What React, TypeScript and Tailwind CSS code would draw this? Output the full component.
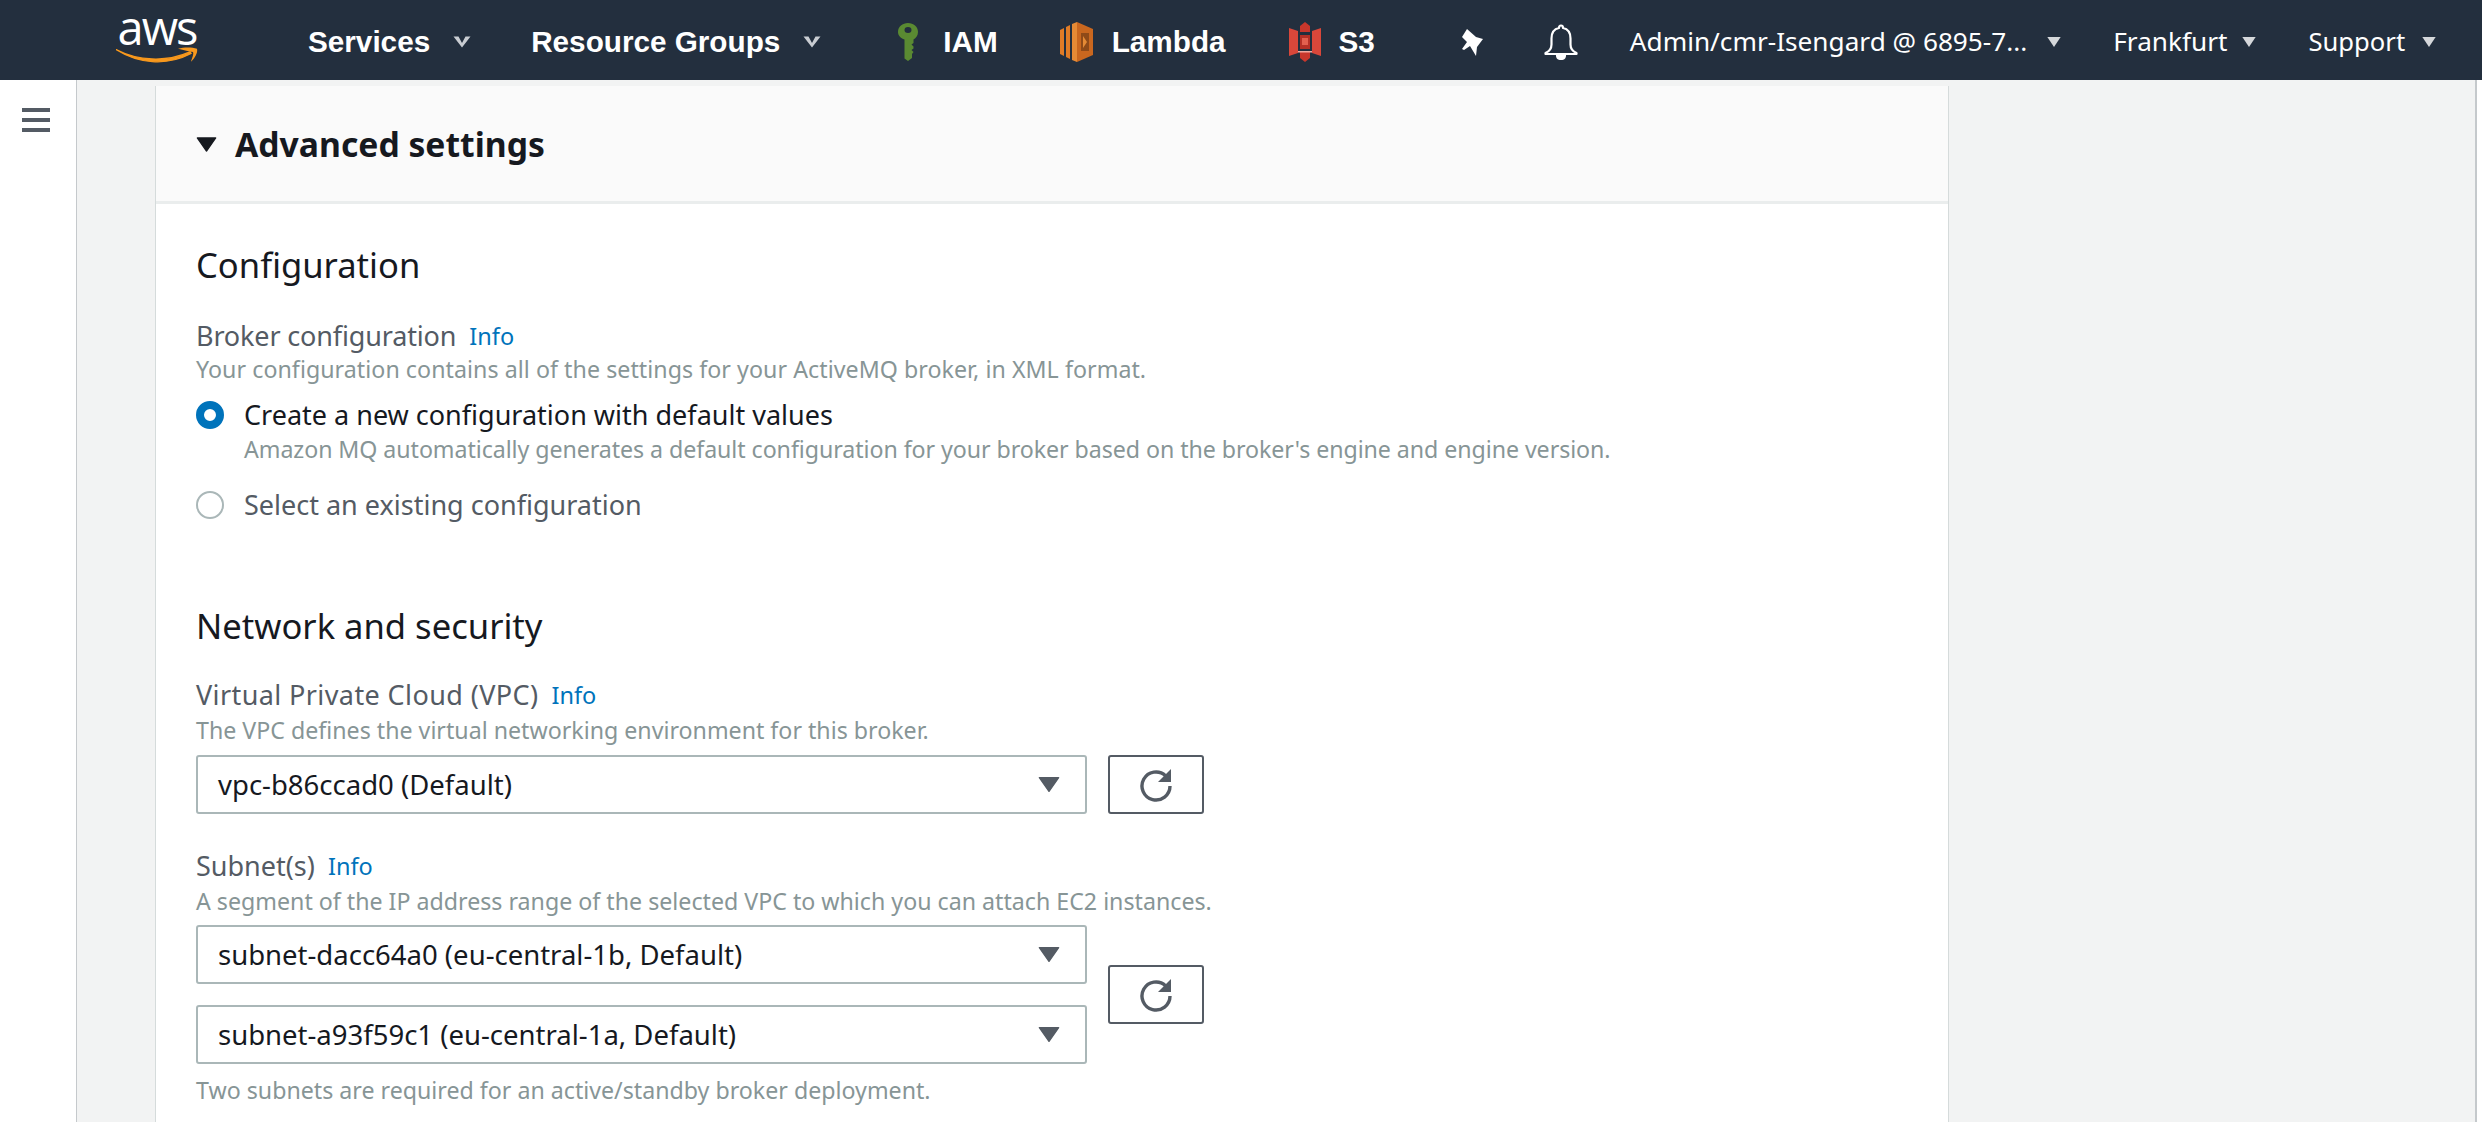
import React from 'react';

const Caret = ({ className }: { className: string }) => (
  <svg viewBox="0 0 16 12" className={className}>
    <path d="M1 1h14L8 11z" fill="currentColor" stroke="currentColor" strokeWidth="1" strokeLinejoin="round" />
  </svg>
);

const NavChevron = () => (
  <svg viewBox="0 0 18 12" className="w-[18px] h-[12px] text-[#c9cdd2]">
    <path d="M0.5 0.5h5L9 7l3.500-6.500h5L9 11.500z" fill="currentColor" />
  </svg>
);

const SmallCaret = () => (
  <svg viewBox="0 0 12 9" className="w-[14px] h-[10px] text-[#d5d8db]">
    <path d="M0 0h12L6 9z" fill="currentColor" />
  </svg>
);

const KeyIcon = () => (
  <svg viewBox="0 0 22 38" className="w-[22px] h-[38px]">
    <path d="M11 0c5.500 0 10 3.500 10 9 0 3.500-2 6-4.500 7.500V20l-2 1.500 2 2v2l-2 1.500 2 2-1.500 2L15 32v3l-4 3-3.500-2.500V16.500C3.500 15 1 12.500 1 9c0-5.500 4.500-9 10-9z" fill="#5a8a32" />
    <ellipse cx="11" cy="7" rx="3.500" ry="3" fill="#232f3e" />
  </svg>
);

const LambdaIcon = () => (
  <svg viewBox="0 0 33 40" className="w-[33px] h-[40px]">
    <path d="M17 0l16 7v26l-16 7z" fill="#c9671f" />
    <path d="M0 8l4-2v28l-4-2z" fill="#e07b26" />
    <path d="M6 5l4-2v34l-4-2z" fill="#e07b26" />
    <path d="M12 2l5-2v40l-5-2z" fill="#e58a35" />
    <path d="M21 11h8v18h-8z" fill="#8f4a18" />
    <path d="M23 14l4 6-4 6z" fill="#e58a35" />
  </svg>
);

const S3Icon = () => (
  <svg viewBox="0 0 32 40" className="w-[32px] h-[40px]">
    <path d="M0 6l9 3v22l-9 3z" fill="#d9473a" />
    <path d="M32 6l-9 3v22l9 3z" fill="#d9473a" />
    <path d="M11 4l5-4 5 4v6h-10z" fill="#c9372c" />
    <path d="M11 30h10v6l-5 4-5-4z" fill="#c9372c" />
    <path d="M11 13h10v14H11z" fill="#b53026" />
    <path d="M13 16h6v7h-6z" fill="#e3604f" />
    <path d="M9 29h14v1.500H9z" fill="#f0a99f" />
  </svg>
);

const PinIcon = () => (
  <svg viewBox="0 0 24 27" className="w-[24px] h-[27px]">
    <path d="M8 0l9 8 7 2-6 8-1 9-6-10-6 4-2-1 5-7-5-5z" fill="#ffffff" />
  </svg>
);

const BellIcon = () => (
  <svg viewBox="0 0 34 36" className="w-[34px] h-[36px]" fill="none" stroke="#ffffff" strokeWidth="2.200">
    <path d="M17 1.500c-1.500 0-2 1-2 2.500-5 1-7.500 5-7.500 10.500v6c0 4-2.500 7-6 8.500v1h31v-1c-3.500-1.500-6-4.500-6-8.500v-6C26.500 9 24 5 19 4c0-1.500-.5-2.500-2-2.500z" strokeLinejoin="round" />
    <path d="M13 31c0 3 2 4 4 4s4-1 4-4" fill="#ffffff" />
  </svg>
);

const Refresh = () => (
  <svg viewBox="0 0 34 34" className="w-[34px] h-[34px] text-[#545b64]">
    <path d="M31 18a14 14 0 1 1-4.500-10.300" fill="none" stroke="currentColor" strokeWidth="3.400" />
    <path d="M32 1v13H19z" fill="currentColor" />
  </svg>
);

const InfoLink = ({ className }: { className: string }) => (
  <span className={`text-[#0073bb] text-[23.5px] leading-[30px] ${className}`}>Info</span>
);

const Select = ({ value }: { value: string }) => (
  <div className="w-[891px] h-[59px] border-2 border-[#aab7b8] rounded-[3px] flex items-center justify-between pl-[20px] pr-[25px] bg-white">
    <span className="text-[27.5px] text-[#16191f]">{value}</span>
    <Caret className="w-[22px] h-[17px] text-[#545b64]" />
  </div>
);

const RefreshButton = ({ className }: { className: string }) => (
  <div className={`w-[96px] h-[59px] border-2 border-[#545b64] rounded-[3px] flex items-center justify-center bg-white ${className}`}>
    <Refresh />
  </div>
);

const Radio = ({ checked }: { checked: boolean }) =>
  checked ? (
    <span className="w-[28px] h-[28px] rounded-full border-[8px] border-[#0073bb] bg-white shrink-0" />
  ) : (
    <span className="w-[28px] h-[28px] rounded-full border-2 border-[#aab7b8] bg-white shrink-0" />
  );

export default function App() {
  return (
    <div className="w-[2482px] h-[1122px] overflow-hidden flex flex-col bg-[#f2f3f3] font-['Noto_Sans',sans-serif]">
      {/* top nav */}
      <header className="h-[80px] shrink-0 bg-[#232f3e] flex items-center pt-[4px] text-white whitespace-nowrap">
        <div className="ml-[112px] w-[90px] h-[50px] self-start -mt-[2px] relative flex flex-col items-center">
          <span className="font-['Open_Sans',sans-serif] text-[47px] leading-[50px] tracking-[-2px]">aws</span>
          <svg viewBox="0 0 82 22" preserveAspectRatio="none" className="absolute left-[4px] top-[45px] w-[82px] h-[18px]">
            <path d="M0 3c22 14 50 16 74 3l1 2C50 24 22 20 0 3z" fill="#f7981d" stroke="#f7981d" strokeWidth="1.500" />
            <path d="M62 2c6-2 14-2 19 0 1 5-2 11-6 16 1-5 3-9 2-12-4-1-9-2-15-4z" fill="#f7981d" />
          </svg>
        </div>
        <span className="ml-[106px] font-['Liberation_Sans',sans-serif] font-bold text-[29.7px]">Services</span>
        <span className="ml-[23px]"><NavChevron /></span>
        <span className="ml-[60px] font-['Liberation_Sans',sans-serif] font-bold text-[29.7px]">Resource Groups</span>
        <span className="ml-[23px]"><NavChevron /></span>
        <span className="ml-[76px]"><KeyIcon /></span>
        <span className="ml-[24px] font-['Liberation_Sans',sans-serif] font-bold text-[29.7px]">IAM</span>
        <span className="ml-[62px]"><LambdaIcon /></span>
        <span className="ml-[19px] font-['Liberation_Sans',sans-serif] font-bold text-[29.7px]">Lambda</span>
        <span className="ml-[63px]"><S3Icon /></span>
        <span className="ml-[18px] font-['Liberation_Sans',sans-serif] font-bold text-[29.7px]">S3</span>
        <span className="ml-[84px]"><PinIcon /></span>
        <span className="ml-[61px]"><BellIcon /></span>
        <span className="ml-[52px] text-[26.2px]">Admin/cmr-Isengard @ 6895-7...</span>
        <span className="ml-[20px]"><SmallCaret /></span>
        <span className="ml-[52px] text-[26.2px]">Frankfurt</span>
        <span className="ml-[15px]"><SmallCaret /></span>
        <span className="ml-[52px] text-[25.6px]">Support</span>
        <span className="ml-[17px]"><SmallCaret /></span>
      </header>

      <div className="flex-1 flex min-h-0">
        {/* side rail */}
        <aside className="w-[77px] shrink-0 bg-white border-r border-[#c5c9cc] pt-[28px] pl-[22px]">
          <div className="w-[28px] flex flex-col gap-[6px]">
            <span className="h-[4px] bg-[#545b64]" />
            <span className="h-[4px] bg-[#545b64]" />
            <span className="h-[4px] bg-[#545b64]" />
          </div>
        </aside>

        <main className="flex-1 min-w-0 pl-[78px]">
          <div className="w-[1794px] h-full mt-[6px] bg-white border-x border-[#d5dbdb]">
            <div className="h-[118px] bg-[#fafafa] border-b-[3px] border-[#eaeded] flex items-center pl-[40px] pt-[2px]">
              <Caret className="w-[21px] h-[17px] text-[#16191f]" />
              <h2 className="ml-[18px] text-[33.7px] font-bold text-[#16191f]">Advanced settings</h2>
            </div>

            <div className="pl-[40px] pt-[38px]">
              <h3 className="text-[34.6px] leading-[46px] text-[#16191f]">Configuration</h3>

              <div className="mt-[31px] flex items-center h-[34px]">
                <span className="text-[27px] tracking-[-0.15px] text-[#545b64]">Broker configuration</span>
                <InfoLink className="ml-[13px]" />
              </div>
              <p className="mt-[1px] text-[23.2px] tracking-[0.055px] leading-[30px] text-[#879596]">
                Your configuration contains all of the settings for your ActiveMQ broker, in XML format.
              </p>

              <div className="mt-[15px] flex items-center gap-[20px] h-[32px]">
                <Radio checked />
                <span className="text-[27px] text-[#16191f]">Create a new configuration with default values</span>
              </div>
              <p className="ml-[48px] mt-[3px] text-[23.2px] tracking-[-0.06px] leading-[30px] text-[#879596]">
                Amazon MQ automatically generates a default configuration for your broker based on the broker's engine and engine version.
              </p>

              <div className="mt-[25px] flex items-center gap-[20px] h-[32px]">
                <Radio checked={false} />
                <span className="text-[27px] text-[#545b64]">Select an existing configuration</span>
              </div>

              <h3 className="mt-[82px] text-[34.6px] leading-[46px] text-[#16191f]">Network and security</h3>

              <div className="mt-[29px] flex items-center h-[34px]">
                <span className="text-[27px] tracking-[0.4px] text-[#545b64]">Virtual Private Cloud (VPC)</span>
                <InfoLink className="ml-[13px]" />
              </div>
              <p className="mt-[3px] text-[23.2px] leading-[30px] text-[#879596]">
                The VPC defines the virtual networking environment for this broker.
              </p>
              <div className="mt-[10px] flex">
                <Select value="vpc-b86ccad0 (Default)" />
                <RefreshButton className="ml-[21px]" />
              </div>

              <div className="mt-[35px] flex items-center h-[34px]">
                <span className="text-[27px] text-[#545b64]">Subnet(s)</span>
                <InfoLink className="ml-[13px]" />
              </div>
              <p className="mt-[3px] text-[23.2px] leading-[30px] text-[#879596]">
                A segment of the IP address range of the selected VPC to which you can attach EC2 instances.
              </p>
              <div className="mt-[9px] flex items-center">
                <div className="flex flex-col gap-[21px]">
                  <Select value="subnet-dacc64a0 (eu-central-1b, Default)" />
                  <Select value="subnet-a93f59c1 (eu-central-1a, Default)" />
                </div>
                <RefreshButton className="ml-[21px]" />
              </div>
              <p className="mt-[11px] text-[23.2px] leading-[30px] text-[#879596]">
                Two subnets are required for an active/standby broker deployment.
              </p>
            </div>
          </div>
        </main>

        {/* thin strip past the content scrollbar edge */}
        <div className="w-[7px] shrink-0 bg-white border-l-2 border-[#c5c9cc]" />
      </div>
    </div>
  );
}
